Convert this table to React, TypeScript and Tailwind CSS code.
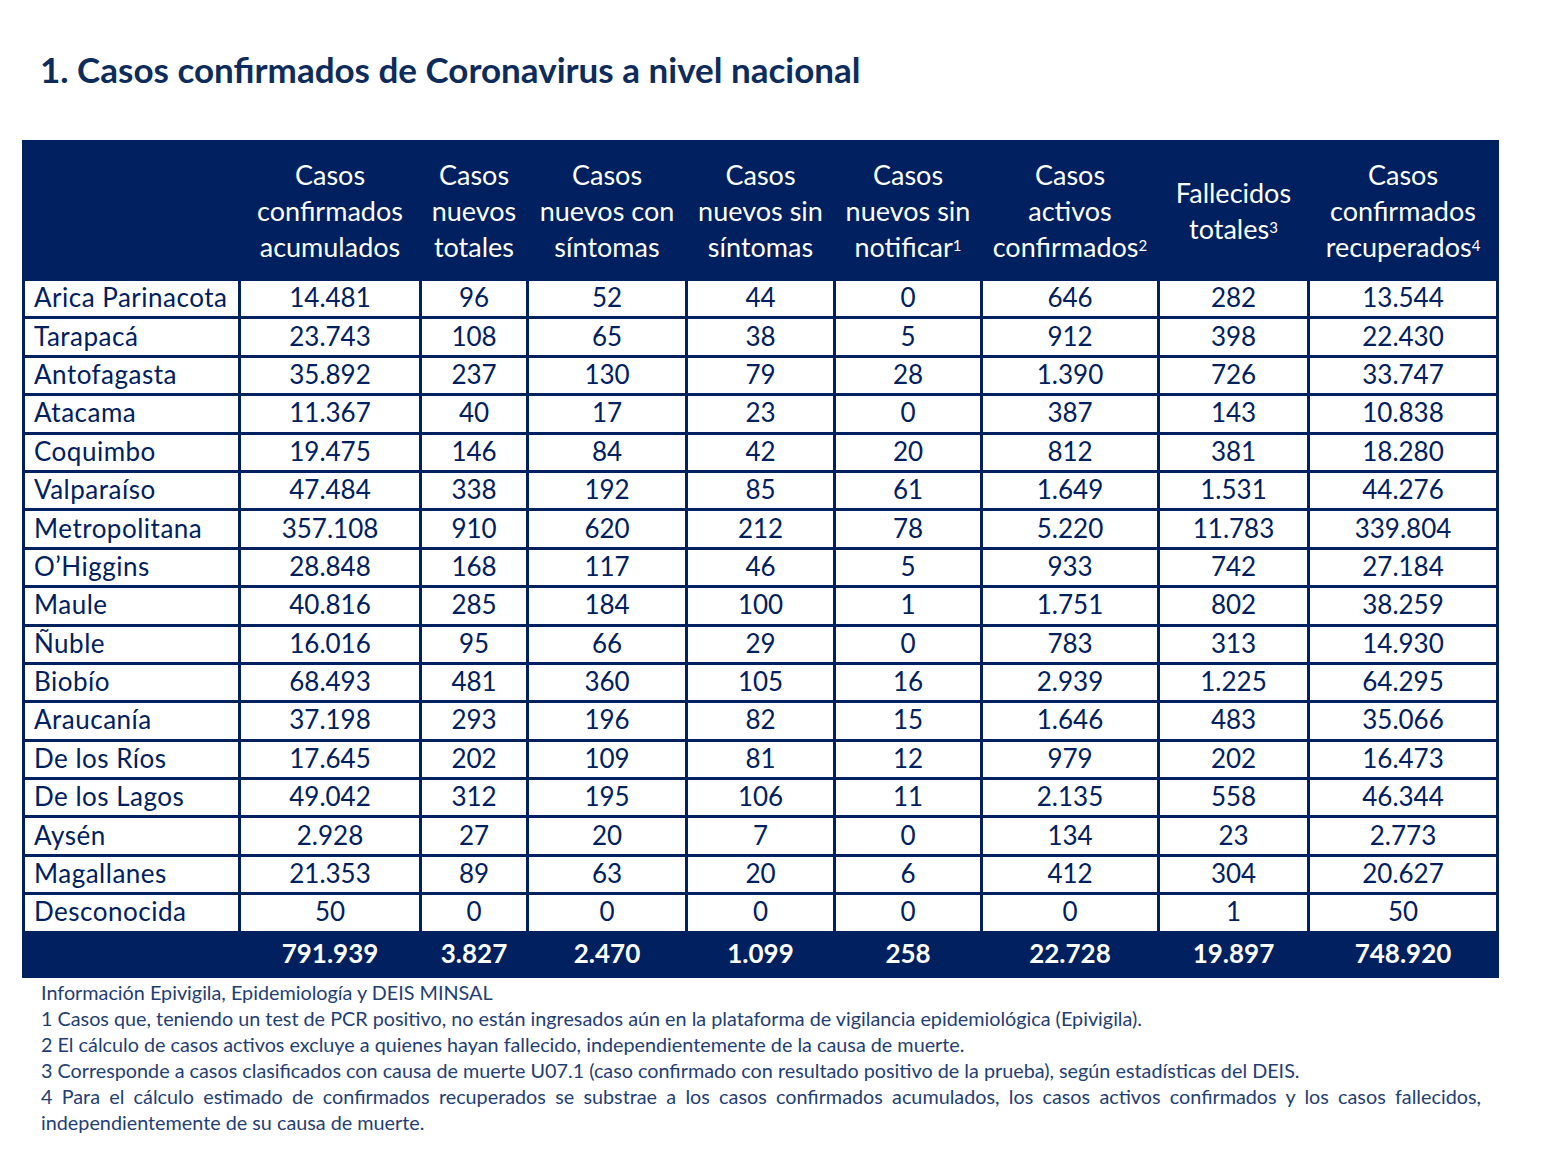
import React from "react";

const rows: [string, ...string[]][] = [
  ["Arica Parinacota", "14.481", "96", "52", "44", "0", "646", "282", "13.544"],
  ["Tarapacá", "23.743", "108", "65", "38", "5", "912", "398", "22.430"],
  ["Antofagasta", "35.892", "237", "130", "79", "28", "1.390", "726", "33.747"],
  ["Atacama", "11.367", "40", "17", "23", "0", "387", "143", "10.838"],
  ["Coquimbo", "19.475", "146", "84", "42", "20", "812", "381", "18.280"],
  ["Valparaíso", "47.484", "338", "192", "85", "61", "1.649", "1.531", "44.276"],
  ["Metropolitana", "357.108", "910", "620", "212", "78", "5.220", "11.783", "339.804"],
  ["O’Higgins", "28.848", "168", "117", "46", "5", "933", "742", "27.184"],
  ["Maule", "40.816", "285", "184", "100", "1", "1.751", "802", "38.259"],
  ["Ñuble", "16.016", "95", "66", "29", "0", "783", "313", "14.930"],
  ["Biobío", "68.493", "481", "360", "105", "16", "2.939", "1.225", "64.295"],
  ["Araucanía", "37.198", "293", "196", "82", "15", "1.646", "483", "35.066"],
  ["De los Ríos", "17.645", "202", "109", "81", "12", "979", "202", "16.473"],
  ["De los Lagos", "49.042", "312", "195", "106", "11", "2.135", "558", "46.344"],
  ["Aysén", "2.928", "27", "20", "7", "0", "134", "23", "2.773"],
  ["Magallanes", "21.353", "89", "63", "20", "6", "412", "304", "20.627"],
  ["Desconocida", "50", "0", "0", "0", "0", "0", "1", "50"],
];

const totals = ["791.939", "3.827", "2.470", "1.099", "258", "22.728", "19.897", "748.920"];

const widths = [216, 181, 107, 159, 148, 147, 177, 150, 189];

const Sup = ({ n }: { n: string }) => (
  <span className="text-[15px] align-[6px] leading-none">{n}</span>
);

const headers: React.ReactNode[] = [
  "",
  <>Casos<br />confirmados<br />acumulados</>,
  <>Casos<br />nuevos<br />totales</>,
  <>Casos<br />nuevos con<br />síntomas</>,
  <>Casos<br />nuevos sin<br />síntomas</>,
  <>Casos<br />nuevos sin<br />notificar<Sup n="1" /></>,
  <>Casos<br />activos<br />confirmados<Sup n="2" /></>,
  <>Fallecidos<br />totales<Sup n="3" /></>,
  <>Casos<br />confirmados<br />recuperados<Sup n="4" /></>,
];

export default function App() {
  return (
    <div
      className="w-[1550px] h-[1176px] bg-white"
      style={{ fontFamily: "Lato, 'Open Sans', sans-serif" }}
    >
      <div className="pt-[48px] pl-[40px] h-[140px]">
        <h1 className="text-[35px] font-bold text-[#0d2c5c] leading-[42px]">
          1. Casos confirmados de Coronavirus a nivel nacional
        </h1>
      </div>
      <div className="pl-[22px]">
        <table className="table-fixed border-collapse w-[1475px] text-[#002060]">
          <colgroup>
            {widths.map((w, i) => (
              <col key={i} style={{ width: w }} />
            ))}
          </colgroup>
          <thead>
            <tr className="h-[138px] bg-[#002060] text-white">
              {headers.map((h, i) => (
                <th
                  key={i}
                  className="font-normal text-[27px] leading-[36px] text-center align-middle px-0 border-[3px] border-[#002060] whitespace-nowrap"
                >
                  {h}
                </th>
              ))}
            </tr>
          </thead>
          <tbody>
            {rows.map((r) => (
              <tr key={r[0]} className="h-[38.4px]">
                {r.map((c, i) => (
                  <td
                    key={i}
                    className={
                      "border-[3px] border-[#002060] text-[26px] leading-[30px] p-0 pb-[3px] whitespace-nowrap " +
                      (i === 0 ? "text-left pl-[9px] tracking-[0.5px]" : "text-center")
                    }
                  >
                    {c}
                  </td>
                ))}
              </tr>
            ))}
            <tr className="h-[44px] bg-[#002060] text-white">
              <td className="border-[3px] border-[#002060]"></td>
              {totals.map((t, i) => (
                <td
                  key={i}
                  className="border-[3px] border-[#002060] text-center font-bold text-[26px] leading-[30px] p-0 pb-[3px]"
                >
                  {t}
                </td>
              ))}
            </tr>
          </tbody>
        </table>
      </div>
      <div className="pl-[41px] pt-[1px] w-[1481px] text-[19.8px] leading-[26px] text-[#1f3e73]">
        <p>Información Epivigila, Epidemiología y DEIS MINSAL</p>
        <p>
          1 Casos que, teniendo un test de PCR positivo, no están ingresados aún en la plataforma de vigilancia epidemiológica (Epivigila).
        </p>
        <p>2 El cálculo de casos activos excluye a quienes hayan fallecido, independientemente de la causa de muerte.</p>
        <p>
          3 Corresponde a casos clasificados con causa de muerte U07.1 (caso confirmado con resultado positivo de la prueba), según estadísticas del DEIS.
        </p>
        <p className="text-justify">
          4 Para el cálculo estimado de confirmados recuperados se substrae a los casos confirmados acumulados, los casos activos confirmados y los casos fallecidos, independientemente de su causa de muerte.
        </p>
      </div>
    </div>
  );
}
